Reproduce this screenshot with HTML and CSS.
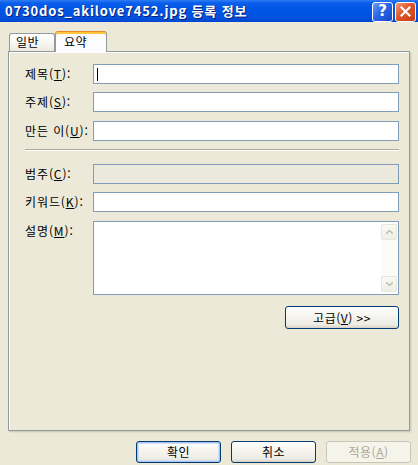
FILE: index.html
```
<!DOCTYPE html>
<html lang="ko">
<head>
    <meta charset="UTF-8">
    <title>0730dos_akilove7452.jpg 등록 정보</title>
    <link rel="stylesheet" href="styles.css">
</head>
<body>
    <div class="titlebar">
        <span class="title">0730dos_akilove7452.jpg 등록 정보</span>
        <div class="caption-btns">
            <span class="cap-btn help">?</span>
            <span class="cap-btn close">
                <svg width="11" height="11" viewBox="0 0 11 11"><path d="M1.5 1.5 L9.5 9.5 M9.5 1.5 L1.5 9.5" stroke="#fff" stroke-width="2.2" stroke-linecap="square"/></svg>
            </span>
        </div>
    </div>

    <div class="tabs">
        <div class="tab">일반</div>
        <div class="tab active">요약</div>
    </div>

    <div class="panel">
        <div class="row">
            <label>제목(<u>T</u>):</label>
            <div class="field"><span class="caret"></span></div>
        </div>
        <div class="row gap9">
            <label>주제(<u>S</u>):</label>
            <div class="field"></div>
        </div>
        <div class="row">
            <label>만든 이(<u>U</u>):</label>
            <div class="field"></div>
        </div>

        <div class="separator"></div>

        <div class="row">
            <label>범주(<u>C</u>):</label>
            <div class="field disabled"></div>
        </div>
        <div class="row gap9">
            <label>키워드(<u>K</u>):</label>
            <div class="field"></div>
        </div>
        <div class="row top">
            <label>설명(<u>M</u>):</label>
            <div class="field memo">
                <div class="scrollbar">
                    <span class="sb-btn"><svg width="7" height="4" viewBox="0 0 7 4"><path d="M0 4 L3.5 0.5 L7 4" fill="none" stroke="#c4c2b4" stroke-width="1.6"/></svg></span>
                    <span class="sb-track"></span>
                    <span class="sb-btn"><svg width="7" height="4" viewBox="0 0 7 4"><path d="M0 0 L3.5 3.5 L7 0" fill="none" stroke="#c4c2b4" stroke-width="1.6"/></svg></span>
                </div>
            </div>
        </div>

        <div class="advanced-row">
            <button class="btn advanced">고급(<u>V</u>) &gt;&gt;</button>
        </div>
    </div>

    <div class="dialog-buttons">
        <button class="btn default">확인</button>
        <button class="btn">취소</button>
        <button class="btn" disabled>적용(<u>A</u>)</button>
    </div>
</body>
</html>
```

FILE: styles.css
```
body {
    margin: 0;
    width: 418px;
    height: 465px;
    overflow: hidden;
    background-color: #ece9d8;
    font-family: "Noto Sans CJK KR", "Noto Sans", sans-serif;
    font-size: 12px;
    color: #000;
}
u {
    text-decoration: underline;
    text-underline-offset: 1px;
}

/* title bar */
.titlebar {
    height: 22px;
    display: flex;
    align-items: center;
    justify-content: space-between;
    padding: 0 2px 0 5px;
    background: linear-gradient(to bottom, #2f7cf5 0, #0a5eea 3px, #0055e5 40%, #0052df 80%, #0047cf 100%);
}
.title {
    color: #fff;
    font-weight: bold;
    font-size: 13px;
    line-height: 22px;
    letter-spacing: 0.85px;
    text-shadow: 1px 1px 0 #0a1e72;
}
.caption-btns {
    display: flex;
    gap: 2px;
    margin-top: 1px;
}
.cap-btn {
    width: 19px;
    height: 18px;
    border: 1px solid #fff;
    border-radius: 3px;
    display: flex;
    align-items: center;
    justify-content: center;
    color: #fff;
    font-family: "DejaVu Sans", sans-serif;
    font-weight: bold;
    font-size: 15px;
    line-height: 1;
}
.cap-btn.help {
    background: linear-gradient(135deg, #6b9cf7 0, #2b66e6 45%, #1747c9 100%);
}
.cap-btn.close {
    background: linear-gradient(135deg, #f09a7c 0, #e0552c 45%, #c83c14 100%);
}

/* tabs */
.tabs {
    display: flex;
    align-items: flex-end;
    margin: 9px 0 0 9px;
    height: 20px;
}
.tab {
    box-sizing: border-box;
    height: 18px;
    width: 46px;
    padding-left: 6px;
    line-height: 16px;
    letter-spacing: 0.5px;
    border: 1px solid #919b9c;
    border-bottom: none;
    border-radius: 3px 3px 0 0;
    background: linear-gradient(to bottom, #ffffff 0, #f7f7f4 50%, #ece9de 100%);
}
.tab.active {
    position: relative;
    z-index: 1;
    height: 21px;
    width: 52px;
    padding-left: 8px;
    margin-bottom: -1px;
    line-height: 16px;
    border-top: 1px solid #e68b2c;
    box-shadow: inset 0 2px 0 #ffc83c;
    padding-top: 2px;
    background: #fcfcfe;
}

/* panel */
.panel {
    box-sizing: border-box;
    width: 402px;
    height: 380px;
    margin-left: 8px;
    padding: 12px 10px 0 16px;
    border: 1px solid #919b9c;
    background: #ece9d8;
    box-shadow: inset 1px 1px 0 #fcfcfa, 1px 1px 0 #d0cdbd, 2px 2px 0 #e2dfcf;
}
.row {
    display: flex;
    align-items: center;
    margin-bottom: 8px;
}
.row.gap9 {
    margin-bottom: 9px;
}
.row.top {
    align-items: flex-start;
}
.row label {
    width: 68px;
    flex-shrink: 0;
    line-height: 20px;
    letter-spacing: 0.9px;
    white-space: nowrap;
}
.field {
    box-sizing: border-box;
    width: 306px;
    height: 20px;
    border: 1px solid #7f9db9;
    background: #fff;
    display: flex;
    align-items: center;
}
.field.disabled {
    background: #ebe9dc;
}
.field.memo {
    height: 74px;
    align-items: stretch;
    justify-content: flex-end;
    padding: 2px 1px 2px 0;
}
.caret {
    width: 1px;
    height: 13px;
    margin-left: 3px;
    background: #000;
}
.separator {
    height: 1px;
    margin: 2px 0 13px;
    background: #aca899;
    border-bottom: 1px solid #fff;
}

/* memo scrollbar (disabled) */
.scrollbar {
    width: 16px;
    display: flex;
    flex-direction: column;
    background: #fbfbf8;
}
.sb-btn {
    box-sizing: border-box;
    height: 16px;
    display: flex;
    align-items: center;
    justify-content: center;
    border: 1px solid #e8e6da;
    border-radius: 2px;
    background: linear-gradient(to bottom, #fafaf6, #efeee6);
}
.sb-track {
    flex: 1;
}

/* buttons */
.btn {
    box-sizing: border-box;
    width: 85px;
    height: 22px;
    padding: 0;
    font-family: "Noto Sans CJK KR", "Noto Sans", sans-serif;
    font-size: 12px;
    line-height: 18px;
    letter-spacing: 0.5px;
    color: #000;
    border: 1px solid #003c74;
    border-radius: 3px;
    background: linear-gradient(to bottom, #ffffff 0, #f6f5f0 40%, #ecebe4 85%, #d6d0c5 100%);
}
.btn.default {
    box-shadow: inset 0 0 0 1px #a9c4f2, inset 0 0 0 2px #cfdff8;
}
.btn:disabled {
    color: #aca899;
    border-color: #c9c7ba;
    background: #f5f4ea;
}
.advanced-row {
    display: flex;
    justify-content: flex-end;
    margin-top: 11px;
}
.btn.advanced {
    width: 114px;
    height: 23px;
}
.dialog-buttons {
    display: flex;
    justify-content: flex-end;
    gap: 10px;
    margin-top: 10px;
    padding-right: 7px;
}
```
